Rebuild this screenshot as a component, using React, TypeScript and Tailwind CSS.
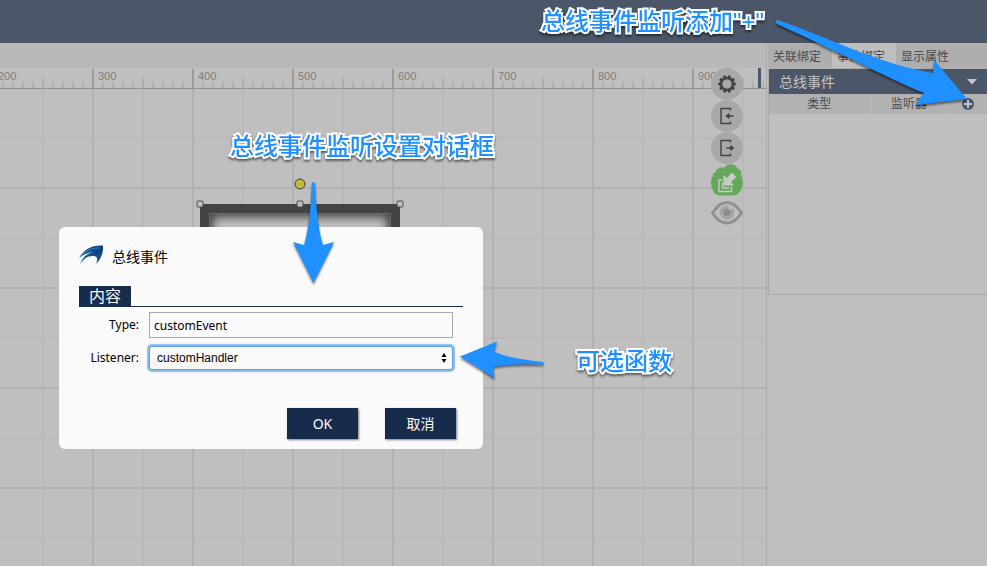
import type { ReactNode } from "react";

const RULER_MARKS = [200, 300, 400, 500, 600, 700, 800, 900];
const HANDLES = [200, 300, 400];
const TABS = ["关联绑定", "事件绑定", "显示属性"];

function Ruler() {
  return (
    <svg className="block h-[21px] w-full shrink-0 bg-[#bfbfbf]" aria-hidden="true">
      <defs>
        <pattern id="ticks" x="-8" y="0" width="100" height="21" patternUnits="userSpaceOnUse">
          <g fill="#aeaeae">
            {[10, 20, 30, 40, 60, 70, 80, 90].map((x) => (
              <rect key={x} x={x} y="14" width="2" height="6" />
            ))}
            <rect x="50" y="10" width="2" height="10" />
          </g>
          <rect x="0" y="1" width="2" height="20" fill="#9b9b9b" />
        </pattern>
      </defs>
      <rect width="100%" height="21" fill="url(#ticks)" />
      <rect y="20" width="100%" height="1" fill="#919191" />
      {RULER_MARKS.map((mark) => (
        <text key={mark} x={mark - 202} y="12" fill="#808080" className="font-['Liberation_Sans',sans-serif] text-[11px]">
          {mark}
        </text>
      ))}
    </svg>
  );
}

function Stage() {
  return (
    <svg className="block w-full flex-1 bg-[#bfbfbf]" aria-label="画布">
      <defs>
        <pattern id="grid" x="-8" y="-2" width="100" height="100" patternUnits="userSpaceOnUse">
          <path d="M50 0h2v100h-2zM0 50h100v2H0z" fill="#b9b9b9" />
          <path d="M0 0h2v100H0zM0 0h100v2H0z" fill="#b1b1b1" />
        </pattern>
        <filter id="soft" x="-20%" y="-20%" width="140%" height="140%">
          <feGaussianBlur stdDeviation="5" />
        </filter>
        <clipPath id="inner">
          <rect x="209" y="124" width="182" height="182" rx="2" />
        </clipPath>
      </defs>
      <rect width="100%" height="100%" fill="url(#grid)" />
      <rect x="200" y="115" width="200" height="200" fill="#434343" />
      <rect x="209" y="124" width="182" height="182" rx="2" fill="#bfbfbf" />
      <g clipPath="url(#inner)">
        <rect x="205" y="120" width="190" height="190" fill="none" stroke="#404040" strokeWidth="16" filter="url(#soft)" />
        <rect x="209.5" y="124.5" width="181" height="181" rx="2" fill="none" stroke="#6c6c6c" strokeWidth="1" />
      </g>
      <circle cx="300" cy="95" r="5" fill="#bfb740" stroke="#434330" strokeWidth="1" />
      {HANDLES.map((x) => (
        <rect key={x} x={x - 3} y="112" width="6" height="6" rx="1" fill="#bfbfbf" stroke="#4a4a4a" strokeWidth="1" />
      ))}
    </svg>
  );
}

function RoundTool({ label, children }: { label: string; children: ReactNode }) {
  return (
    <button type="button" aria-label={label} className="flex size-8 items-center justify-center rounded-full bg-[#a8a8a8]">
      {children}
    </button>
  );
}

function CanvasTools() {
  return (
    <div className="absolute top-[25px] right-[23px] flex flex-col">
      <RoundTool label="设置">
        <svg viewBox="0 0 20 20" className="size-5">
          <g fill="#434343">
            {[18, 54, 90, 126, 162, 198, 234, 270, 306, 342].map((a) => (
              <rect key={a} x="8.5" y="1.2" width="3" height="4" rx="0.8" transform={`rotate(${a} 10 10)`} />
            ))}
          </g>
          <circle cx="10" cy="10" r="6" fill="none" stroke="#434343" strokeWidth="2.4" />
        </svg>
      </RoundTool>
      <RoundTool label="导入">
        <svg viewBox="0 0 16 18" className="h-[18px] w-4" fill="none" stroke="#434343">
          <path d="M11.5 3.5V1.5H2v15h9.500v-2" strokeWidth="1.4" />
          <path d="M14.500 9H8" strokeWidth="1.6" />
          <path d="M10.500 5.800 6.300 9l4.200 3.200z" fill="#434343" stroke="none" />
        </svg>
      </RoundTool>
      <RoundTool label="导出">
        <svg viewBox="0 0 16 18" className="h-[18px] w-4" fill="none" stroke="#434343">
          <path d="M11.500 3.500V1.500H2v15h9.500v-2" strokeWidth="1.4" />
          <path d="M7.500 9h6" strokeWidth="1.6" />
          <path d="M11.300 5.800 15.500 9l-4.200 3.200z" fill="#434343" stroke="none" />
        </svg>
      </RoundTool>
      <button type="button" aria-label="同步" className="size-8">
        <svg viewBox="0 0 32 32" className="size-8">
          <path
            d="M4.500 8C4.500 5 9 3 14 3.500 16-1 25-1 26.500 4.500c4 1.500 4 4 3.500 6.500 2.500 5 2.500 10 0 15-2 3-4 5.500-8 5.500H9c-4 0-6-2.500-7.500-6C-.5 20-.5 15 2 12c-.5-1.500.5-3 2.500-4z"
            fill="#64a95a"
          />
          <path d="M11.500 16H8v11.500h12.500V23" fill="none" stroke="#c6cdc5" strokeWidth="1.400" />
          <path d="M11.500 18.500v5.500H18" fill="none" stroke="#c6cdc5" strokeWidth="1.400" />
          <path d="m21 8.500 4.500 4.500-5.500 5 3 3.500H12.500V11l3.500 3z" fill="#c6cdc5" />
        </svg>
      </button>
      <button type="button" aria-label="预览" className="size-8">
        <svg viewBox="0 0 32 32" className="size-8">
          <path d="M1.500 17C6 9.500 11 6.500 16 6.500s10 3 14.500 10.500C26 24 21 27 16 27S6 24 1.500 17z" fill="#bfbfbf" stroke="#919191" strokeWidth="3" />
          <circle cx="16" cy="16.500" r="7.300" fill="#a6a6a6" />
          <circle cx="16" cy="16.500" r="3.700" fill="#8e8e8e" />
          <path d="m16.500 12 3-3 2 3-3 2z" fill="#b9b9b9" />
        </svg>
      </button>
    </div>
  );
}

function SidePanel() {
  return (
    <aside className="w-[219px] shrink-0 bg-[#bfbfbf] text-xs text-[#4a4a4a]">
      <div role="tablist" className="flex h-[26px] bg-[#aeaeae] pb-px">
        {TABS.map((tab, i) => (
          <button
            key={tab}
            type="button"
            role="tab"
            aria-selected={i === 1}
            className="h-[25px] w-16 pt-0.5 pr-1.5 text-center leading-5 aria-selected:bg-[#bfbfbf]"
          >
            {tab}
          </button>
        ))}
      </div>
      <section className="h-[226px] border-b border-l border-[#aaaaaa]">
        <h2 className="flex h-[25px] items-center justify-between bg-[#4b5768] pr-2.5 pl-2.5 text-sm text-[#c3c6ca]">
          总线事件
          <svg viewBox="0 0 10 6" className="h-1.5 w-2.5">
            <path d="M0 0h10L5 5.500z" fill="#c3c6ca" />
          </svg>
        </h2>
        <table className="w-full table-fixed border-collapse bg-[#b2b2b2]">
          <thead>
            <tr className="h-5">
              <th className="w-[101px] border-r border-[#b7b7b7] p-0 font-normal leading-5">类型</th>
              <th className="border-r border-[#b7b7b7] p-0 font-normal leading-5">监听器</th>
              <th className="w-[39px] p-0">
                <button type="button" aria-label="添加" className="mx-auto block">
                  <svg viewBox="0 0 12 12" className="size-3">
                    <circle cx="6" cy="6" r="6" fill="#4b5768" />
                    <path d="M6 2v8M2 6h8" stroke="#c3c6ca" strokeWidth="2" />
                  </svg>
                </button>
              </th>
            </tr>
          </thead>
        </table>
      </section>
    </aside>
  );
}

function Logo() {
  return (
    <svg viewBox="0 0 24 20" className="h-5 w-6" aria-hidden="true">
      <defs>
        <linearGradient id="wing" x1="0" y1="1" x2="1" y2="0">
          <stop offset="0" stopColor="#3c9ad0" />
          <stop offset="0.450" stopColor="#12599b" />
          <stop offset="1" stopColor="#0a3a75" />
        </linearGradient>
      </defs>
      <path
        d="M0 13C4 5.500 12-.5 24 .5c.5 7-1.500 13-7 18.500 1.800-4.500 1.500-6.500-.5-7.500C14.500 10.800 12 11 9 12.500c2.500-3 5-4.500 8-5.500C12 6.500 6 8.500 0 13z"
        fill="url(#wing)"
      />
      <path d="M1 19.500C3 12 9 7 19 6l-1 4C11 9 5.500 13 1 19.500z" fill="url(#wing)" />
      <path d="M3 9.500C8 5 14 2.500 21 3" fill="none" stroke="#3d8fca" strokeWidth="0.800" />
    </svg>
  );
}

function EventDialog() {
  return (
    <form
      role="dialog"
      aria-labelledby="dialog-title"
      onSubmit={(e) => e.preventDefault()}
      className="absolute top-[227px] left-[59px] w-[424px] rounded-md bg-[#fafafa] px-5 pt-4 pb-2.5 text-black"
    >
      <header className="flex h-[43px] items-start gap-[9px] pt-0.5">
        <Logo />
        <h1 id="dialog-title" className="pt-0.5 text-sm leading-5">
          总线事件
        </h1>
      </header>
      <div className="flex border-b border-[#172b4d]">
        <h2 className="bg-[#172b4d] px-2.5 text-base leading-5 text-[#fafafa]">内容</h2>
      </div>
      <div className="mt-[5px] grid grid-cols-[60px_304px] items-center gap-x-2.5 gap-y-2 text-xs">
        <label htmlFor="event-type" className="text-right">
          Type:
        </label>
        <input
          id="event-type"
          type="text"
          defaultValue="customEvent"
          className="h-[26px] border border-[#a9a9ad] bg-[#fafafa] px-1 outline-none"
        />
        <label htmlFor="event-listener" className="text-right">
          Listener:
        </label>
        <div className="relative">
          <select
            id="event-listener"
            className="block h-6 w-full appearance-none rounded-[3px] border border-[#5b9ee6] bg-[#fafafa] px-[7px] font-['Liberation_Sans',sans-serif] text-xs shadow-[0_0_1px_2px_#8dbbee] outline-none"
          >
            <option>customHandler</option>
          </select>
          <svg viewBox="0 0 6 10" className="pointer-events-none absolute top-[7px] right-1.5 h-2.5 w-1.5">
            <path d="M3 0 5.500 4H.5zM3 10 .5 6h5z" />
          </svg>
        </div>
      </div>
      <footer className="mt-[38px] flex justify-end gap-[27px] pr-[7px] text-sm text-[#fafafa]">
        <button type="submit" className="h-[31px] w-[71px] bg-[#172b4d] shadow-[1px_1px_2px_#00000080]">
          OK
        </button>
        <button type="button" className="h-[31px] w-[71px] bg-[#172b4d] shadow-[1px_1px_2px_#00000080]">
          取消
        </button>
      </footer>
    </form>
  );
}

const NOTE =
  "absolute whitespace-nowrap font-['Liberation_Sans','Noto_Sans_CJK_SC',sans-serif] text-2xl font-medium leading-8 text-[#1e90ff] [-webkit-text-stroke:4px_white] [paint-order:stroke_fill] [stroke-linejoin:round] drop-shadow-[0_2px_1px_#00000080]";

function Annotations() {
  return (
    <div className="pointer-events-none absolute inset-0">
      <svg className="absolute inset-0 size-full drop-shadow-[0_2px_1px_#00000080]" fill="#1e90ff" aria-hidden="true">
        <path d="M778 20C822 35 882 65 933 73L934 60 967 99 915 105 924 93C894 81 822 44 777 24 775 22 776 20 778 20z" />
        <path d="M312 183q1.500-2 3 0C316 205 318 230 323 245L334 242 313.500 283 293 242 304 245C309 230 311 205 312 183z" />
        <path d="M460 356.500 497 341.500 494 351.500C505 357 525 360 543 362q2 1 0 2.500C525 364 508 364 493.500 367L494.500 378z" />
      </svg>
      <p className={`${NOTE} top-[6px] left-[541px]`}>总线事件监听添加"+"</p>
      <p className={`${NOTE} top-[131px] left-[230px]`}>总线事件监听设置对话框</p>
      <p className={`${NOTE} top-[346px] left-[576px]`}>可选函数</p>
    </div>
  );
}

export default function App() {
  return (
    <div className="relative flex min-h-screen flex-col overflow-hidden bg-[#bfbfbf] font-['Noto_Sans','Noto_Sans_CJK_SC',sans-serif]">
      <header className="h-[43px] shrink-0 bg-[#4b5768]" />
      <div className="flex flex-1">
        <main className="relative mr-px flex min-w-0 flex-1 flex-col border-r border-[#aaaaaa]">
          <div className="h-[25px] shrink-0 bg-[#b9b9b9]" />
          <Ruler />
          <Stage />
          <div className="absolute top-[25px] right-[5px] h-5 w-[3px] bg-[#4b5768]" />
          <CanvasTools />
        </main>
        <SidePanel />
      </div>
      <EventDialog />
      <Annotations />
    </div>
  );
}
